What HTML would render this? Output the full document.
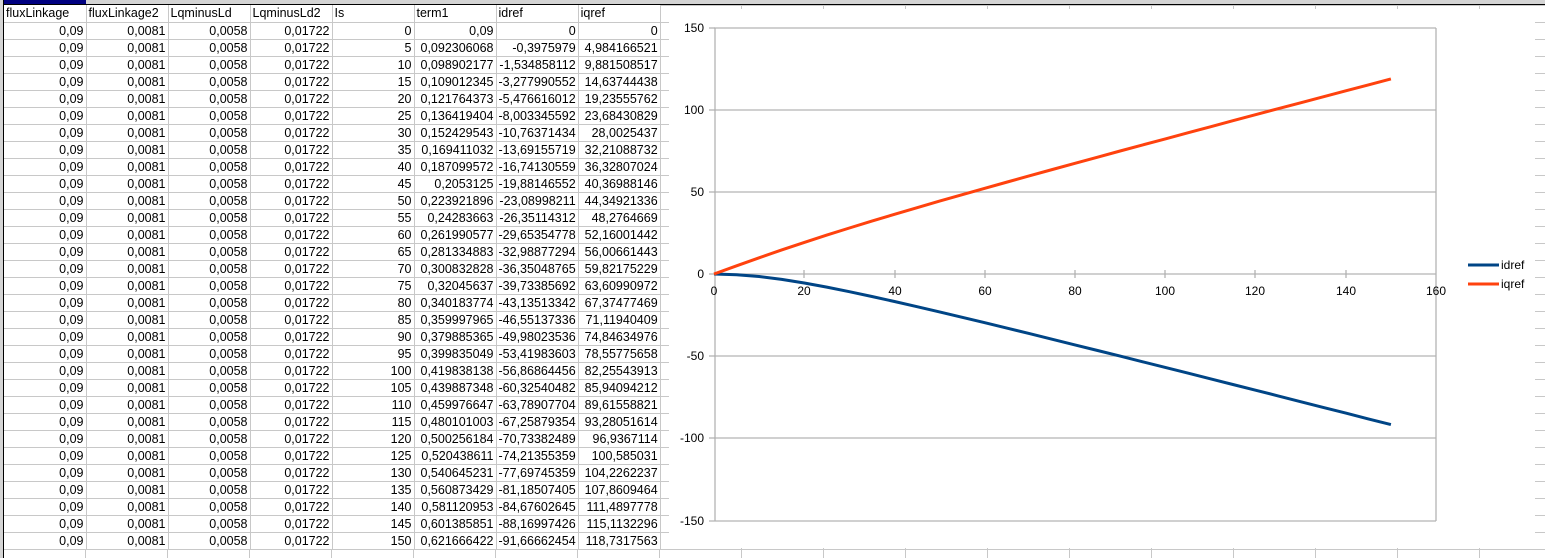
<!DOCTYPE html>
<html><head><meta charset="utf-8"><style>
*{margin:0;padding:0;box-sizing:border-box}
body{width:1545px;height:558px;overflow:hidden;background:#fff;position:relative;font-family:"Liberation Sans",sans-serif;font-size:12.5px;color:#000}
#grid{position:absolute;left:0;top:0;width:1545px;height:558px;
background-image:linear-gradient(to right,#c8c8c8 1px,transparent 1px),linear-gradient(to bottom,#c8c8c8 1px,transparent 1px);
background-size:82px 17px;background-position:3px 5px}
table{position:absolute;left:4px;top:5px;border-collapse:collapse;table-layout:fixed;background:#fff}
td{width:82px;height:17px;border-right:1px solid #c8c8c8;border-bottom:1px solid #c8c8c8;padding:0 2px;line-height:16px;text-align:right;white-space:nowrap;overflow:hidden}
tr.h td{text-align:left}
#topbar{position:absolute;left:0;top:0;width:1545px;height:5px;background:#d4d4d4;border-bottom:1px solid #000}
#sel{position:absolute;left:0;top:0;width:86px;height:4px;background:#000080}
#leftbar{position:absolute;left:0;top:0;width:4px;height:558px;background:#d4d4d4;border-right:1px solid #000}
#chart{position:absolute;left:669px;top:9px;width:866px;height:539px;background:#fff}
svg{position:absolute;left:0;top:0}
</style></head><body>
<div id="grid"></div>
<div id="topbar"></div><div id="sel"></div><div id="leftbar"></div>
<table>
<tr class="h"><td>fluxLinkage</td><td>fluxLinkage2</td><td>LqminusLd</td><td>LqminusLd2</td><td>Is</td><td>term1</td><td>idref</td><td>iqref</td></tr>
<tr><td>0,09</td><td>0,0081</td><td>0,0058</td><td>0,01722</td><td>0</td><td>0,09</td><td>0</td><td>0</td></tr>
<tr><td>0,09</td><td>0,0081</td><td>0,0058</td><td>0,01722</td><td>5</td><td>0,092306068</td><td>-0,3975979</td><td>4,984166521</td></tr>
<tr><td>0,09</td><td>0,0081</td><td>0,0058</td><td>0,01722</td><td>10</td><td>0,098902177</td><td>-1,534858112</td><td>9,881508517</td></tr>
<tr><td>0,09</td><td>0,0081</td><td>0,0058</td><td>0,01722</td><td>15</td><td>0,109012345</td><td>-3,277990552</td><td>14,63744438</td></tr>
<tr><td>0,09</td><td>0,0081</td><td>0,0058</td><td>0,01722</td><td>20</td><td>0,121764373</td><td>-5,476616012</td><td>19,23555762</td></tr>
<tr><td>0,09</td><td>0,0081</td><td>0,0058</td><td>0,01722</td><td>25</td><td>0,136419404</td><td>-8,003345592</td><td>23,68430829</td></tr>
<tr><td>0,09</td><td>0,0081</td><td>0,0058</td><td>0,01722</td><td>30</td><td>0,152429543</td><td>-10,76371434</td><td>28,0025437</td></tr>
<tr><td>0,09</td><td>0,0081</td><td>0,0058</td><td>0,01722</td><td>35</td><td>0,169411032</td><td>-13,69155719</td><td>32,21088732</td></tr>
<tr><td>0,09</td><td>0,0081</td><td>0,0058</td><td>0,01722</td><td>40</td><td>0,187099572</td><td>-16,74130559</td><td>36,32807024</td></tr>
<tr><td>0,09</td><td>0,0081</td><td>0,0058</td><td>0,01722</td><td>45</td><td>0,2053125</td><td>-19,88146552</td><td>40,36988146</td></tr>
<tr><td>0,09</td><td>0,0081</td><td>0,0058</td><td>0,01722</td><td>50</td><td>0,223921896</td><td>-23,08998211</td><td>44,34921336</td></tr>
<tr><td>0,09</td><td>0,0081</td><td>0,0058</td><td>0,01722</td><td>55</td><td>0,24283663</td><td>-26,35114312</td><td>48,2764669</td></tr>
<tr><td>0,09</td><td>0,0081</td><td>0,0058</td><td>0,01722</td><td>60</td><td>0,261990577</td><td>-29,65354778</td><td>52,16001442</td></tr>
<tr><td>0,09</td><td>0,0081</td><td>0,0058</td><td>0,01722</td><td>65</td><td>0,281334883</td><td>-32,98877294</td><td>56,00661443</td></tr>
<tr><td>0,09</td><td>0,0081</td><td>0,0058</td><td>0,01722</td><td>70</td><td>0,300832828</td><td>-36,35048765</td><td>59,82175229</td></tr>
<tr><td>0,09</td><td>0,0081</td><td>0,0058</td><td>0,01722</td><td>75</td><td>0,32045637</td><td>-39,73385692</td><td>63,60990972</td></tr>
<tr><td>0,09</td><td>0,0081</td><td>0,0058</td><td>0,01722</td><td>80</td><td>0,340183774</td><td>-43,13513342</td><td>67,37477469</td></tr>
<tr><td>0,09</td><td>0,0081</td><td>0,0058</td><td>0,01722</td><td>85</td><td>0,359997965</td><td>-46,55137336</td><td>71,11940409</td></tr>
<tr><td>0,09</td><td>0,0081</td><td>0,0058</td><td>0,01722</td><td>90</td><td>0,379885365</td><td>-49,98023536</td><td>74,84634976</td></tr>
<tr><td>0,09</td><td>0,0081</td><td>0,0058</td><td>0,01722</td><td>95</td><td>0,399835049</td><td>-53,41983603</td><td>78,55775658</td></tr>
<tr><td>0,09</td><td>0,0081</td><td>0,0058</td><td>0,01722</td><td>100</td><td>0,419838138</td><td>-56,86864456</td><td>82,25543913</td></tr>
<tr><td>0,09</td><td>0,0081</td><td>0,0058</td><td>0,01722</td><td>105</td><td>0,439887348</td><td>-60,32540482</td><td>85,94094212</td></tr>
<tr><td>0,09</td><td>0,0081</td><td>0,0058</td><td>0,01722</td><td>110</td><td>0,459976647</td><td>-63,78907704</td><td>89,61558821</td></tr>
<tr><td>0,09</td><td>0,0081</td><td>0,0058</td><td>0,01722</td><td>115</td><td>0,480101003</td><td>-67,25879354</td><td>93,28051614</td></tr>
<tr><td>0,09</td><td>0,0081</td><td>0,0058</td><td>0,01722</td><td>120</td><td>0,500256184</td><td>-70,73382489</td><td>96,9367114</td></tr>
<tr><td>0,09</td><td>0,0081</td><td>0,0058</td><td>0,01722</td><td>125</td><td>0,520438611</td><td>-74,21355359</td><td>100,585031</td></tr>
<tr><td>0,09</td><td>0,0081</td><td>0,0058</td><td>0,01722</td><td>130</td><td>0,540645231</td><td>-77,69745359</td><td>104,2262237</td></tr>
<tr><td>0,09</td><td>0,0081</td><td>0,0058</td><td>0,01722</td><td>135</td><td>0,560873429</td><td>-81,18507405</td><td>107,8609464</td></tr>
<tr><td>0,09</td><td>0,0081</td><td>0,0058</td><td>0,01722</td><td>140</td><td>0,581120953</td><td>-84,67602645</td><td>111,4897778</td></tr>
<tr><td>0,09</td><td>0,0081</td><td>0,0058</td><td>0,01722</td><td>145</td><td>0,601385851</td><td>-88,16997426</td><td>115,1132296</td></tr>
<tr><td>0,09</td><td>0,0081</td><td>0,0058</td><td>0,01722</td><td>150</td><td>0,621666422</td><td>-91,66662454</td><td>118,7317563</td></tr>
</table>
<div id="chart"></div>
<svg width="1545" height="558" font-family="Liberation Sans, sans-serif" font-size="12">
<g stroke="#b3b3b3" stroke-width="1.3" fill="none">
<line x1="714" y1="28" x2="1436" y2="28"/>
<line x1="714" y1="110" x2="1436" y2="110"/>
<line x1="714" y1="192" x2="1436" y2="192"/>
<line x1="714" y1="274" x2="1436" y2="274"/>
<line x1="714" y1="356" x2="1436" y2="356"/>
<line x1="714" y1="438" x2="1436" y2="438"/>
<line x1="709" y1="521" x2="1436" y2="521"/>
<line x1="715" y1="28" x2="715" y2="521"/>
<line x1="1436" y1="28" x2="1436" y2="521"/>
<line x1="709" y1="28" x2="715" y2="28"/><line x1="709" y1="110" x2="715" y2="110"/><line x1="709" y1="192" x2="715" y2="192"/><line x1="709" y1="274" x2="715" y2="274"/><line x1="709" y1="356" x2="715" y2="356"/><line x1="709" y1="438" x2="715" y2="438"/>
<line x1="804" y1="270" x2="804" y2="278"/><line x1="895" y1="270" x2="895" y2="278"/><line x1="985" y1="270" x2="985" y2="278"/><line x1="1075" y1="270" x2="1075" y2="278"/><line x1="1165" y1="270" x2="1165" y2="278"/><line x1="1255" y1="270" x2="1255" y2="278"/><line x1="1346" y1="270" x2="1346" y2="278"/>
</g>
<g text-anchor="end">
<text x="704" y="32">150</text><text x="704" y="114">100</text><text x="704" y="196">50</text><text x="704" y="278">0</text><text x="704" y="360">-50</text><text x="704" y="442">-100</text><text x="704" y="525">-150</text>
</g>
<g text-anchor="middle">
<text x="714" y="295">0</text><text x="804" y="295">20</text><text x="895" y="295">40</text><text x="985" y="295">60</text><text x="1075" y="295">80</text><text x="1165" y="295">100</text><text x="1255" y="295">120</text><text x="1346" y="295">140</text><text x="1436" y="295">160</text>
</g>
<polyline fill="none" stroke="#004586" stroke-width="3" stroke-linejoin="round" points="714,274 736.6,274.7 759.1,276.5 781.7,279.4 804.3,283 826.8,287.1 849.4,291.7 871.9,296.5 894.5,301.5 917.1,306.7 939.6,311.9 962.2,317.3 984.8,322.7 1007.3,328.2 1029.9,333.7 1052.4,339.3 1075,344.9 1097.6,350.5 1120.1,356.1 1142.7,361.8 1165.3,367.4 1187.8,373.1 1210.4,378.8 1232.9,384.5 1255.5,390.2 1278.1,395.9 1300.6,401.7 1323.2,407.4 1345.8,413.1 1368.3,418.9 1390.9,424.6"/>
<polyline fill="none" stroke="#ff420e" stroke-width="3" stroke-linejoin="round" points="714,274 736.6,265.8 759.1,257.8 781.7,249.9 804.3,242.4 826.8,235.1 849.4,228 871.9,221.1 894.5,214.3 917.1,207.7 939.6,201.1 962.2,194.7 984.8,188.3 1007.3,182 1029.9,175.7 1052.4,169.5 1075,163.3 1097.6,157.2 1120.1,151 1142.7,144.9 1165.3,138.9 1187.8,132.8 1210.4,126.8 1232.9,120.7 1255.5,114.7 1278.1,108.7 1300.6,102.8 1323.2,96.8 1345.8,90.8 1368.3,84.9 1390.9,78.9"/>
<line x1="1468" y1="265" x2="1499" y2="265" stroke="#004586" stroke-width="3"/>
<line x1="1468" y1="284" x2="1499" y2="284" stroke="#ff420e" stroke-width="3"/>
<text x="1501" y="269">idref</text>
<text x="1501" y="288">iqref</text>
</svg>
</body></html>
